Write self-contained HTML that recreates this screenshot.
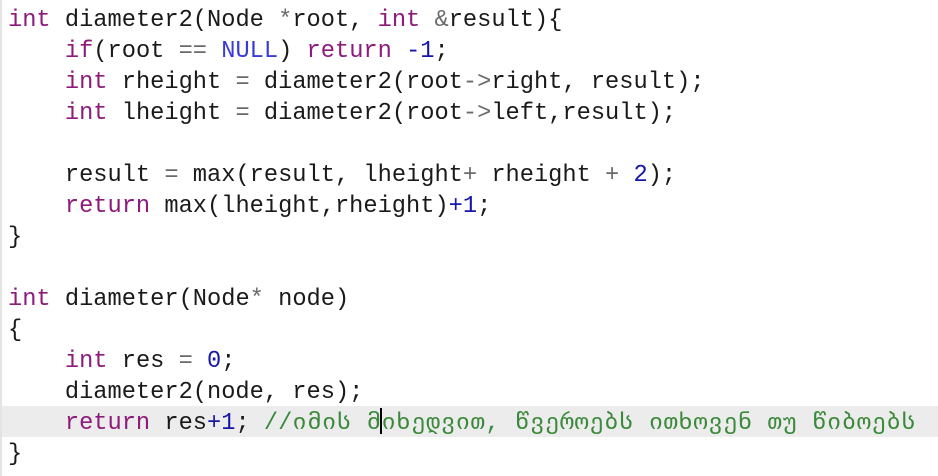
<!DOCTYPE html>
<html><head><meta charset="utf-8"><style>
html,body{margin:0;padding:0;background:#fff;width:938px;height:476px;overflow:hidden}
pre{margin:0;padding:5px 0 0 8px;font-family:"Liberation Mono","DejaVu Sans Mono","DejaVu Sans",monospace;font-size:23.7px;line-height:31px;color:#1a1a1a;position:relative}
.k{color:#8e1b7c}.n{color:#3b3bd6}.d{color:#1616a8}.o{color:#6a6a6a}.c{color:#3b8a3b}
.g{letter-spacing:0.6px}
.hl{position:absolute;left:0;top:406px;width:938px;height:31px;background:#ececec}
.bar{position:absolute;left:0;top:0;width:2px;height:476px;background:#e4e4e4}
.cur{display:inline-block;width:2px;height:26px;background:#000;vertical-align:-5px;margin:0 -1px}
</style></head><body>
<div class="hl"></div><div class="bar"></div>
<pre><span class="k">int</span> diameter2(Node <span class="o">*</span>root, <span class="k">int</span> <span class="o">&amp;</span>result){
    <span class="k">if</span>(root <span class="o">==</span> <span class="n">NULL</span>) <span class="k">return</span> <span class="d">-1</span>;
    <span class="k">int</span> rheight <span class="o">=</span> diameter2(root<span class="o">-&gt;</span>right, result);
    <span class="k">int</span> lheight <span class="o">=</span> diameter2(root<span class="o">-&gt;</span>left,result);

    result <span class="o">=</span> max(result, lheight<span class="o">+</span> rheight <span class="o">+</span> <span class="d">2</span>);
    <span class="k">return</span> max(lheight,rheight)<span class="d">+1</span>;
}

<span class="k">int</span> diameter(Node<span class="o">*</span> node)
{
    <span class="k">int</span> res <span class="o">=</span> <span class="d">0</span>;
    diameter2(node, res);
    <span class="k">return</span> res<span class="d">+1</span>; <span class="c">//<span class="g">იმის მ<span class="cur"></span>იხედვით, წვეროებს ითხოვენ თუ წიბოებს</span></span>
}</pre>
</body></html>
